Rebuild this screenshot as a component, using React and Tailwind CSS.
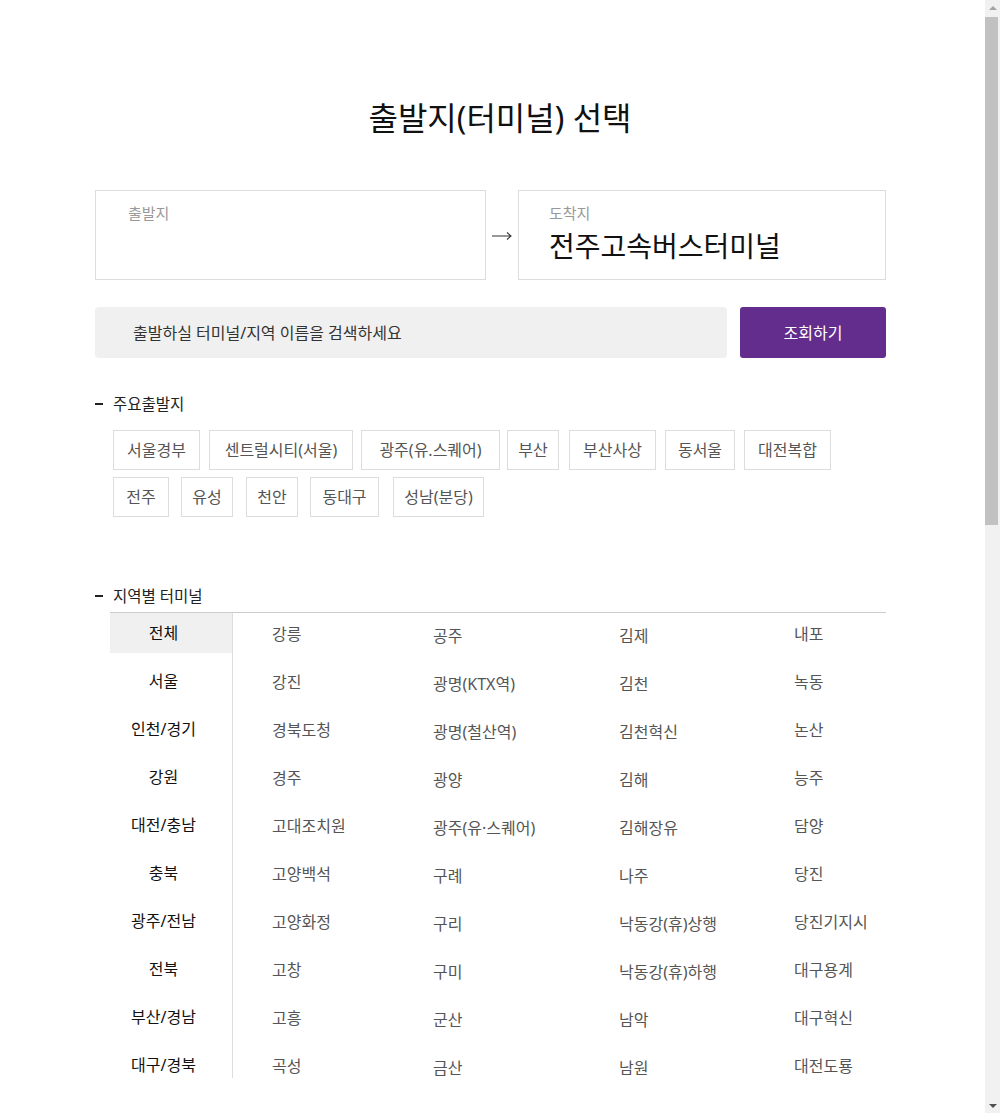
const majorTerminals = [
  [
    ["서울경부", "w-[87px] mr-[9px]"],
    ["센트럴시티(서울)", "w-[144px] mr-[8px]"],
    ["광주(유.스퀘어)", "w-[139px] mr-[7px]"],
    ["부산", "w-[52px] mr-[10px]"],
    ["부산사상", "w-[87px] mr-[9px]"],
    ["동서울", "w-[70px] mr-[9px]"],
    ["대전복합", "w-[87px]"],
  ],
  [
    ["전주", "w-[56px] mr-[12px]"],
    ["유성", "w-[52px] mr-[13px]"],
    ["천안", "w-[52px] mr-[12px]"],
    ["동대구", "w-[69px] mr-[14px]"],
    ["성남(분당)", "w-[91px]"],
  ],
];

const regions = ["전체", "서울", "인천/경기", "강원", "대전/충남", "충북", "광주/전남", "전북", "부산/경남", "대구/경북"];

const terminalColumns = [
  ["강릉", "강진", "경북도청", "경주", "고대조치원", "고양백석", "고양화정", "고창", "고흥", "곡성"],
  ["공주", "광명(KTX역)", "광명(철산역)", "광양", "광주(유·스퀘어)", "구례", "구리", "구미", "군산", "금산"],
  ["김제", "김천", "김천혁신", "김해", "김해장유", "나주", "낙동강(휴)상행", "낙동강(휴)하행", "남악", "남원"],
  ["내포", "녹동", "논산", "능주", "담양", "당진", "당진기지시", "대구용계", "대구혁신", "대전도룡"],
];

const SectionTitle = ({ children }) => (
  <div className="flex items-center h-[22px]">
    <span className="w-[8px] h-[2px] bg-[#222]" />
    <span className="ml-[10px] text-[15.5px] leading-[22px] text-[#222]">{children}</span>
  </div>
);

// browser scrollbar as it shows in the capture
const FakeScrollbar = () => (
  <div className="fixed top-0 right-0 w-[15px] h-full bg-[#f1f1f1] flex flex-col items-center">
    <div className="h-[15px] w-full flex items-center justify-center">
      <span className="w-0 h-0 border-l-[4px] border-r-[4px] border-b-[4px] border-l-transparent border-r-transparent border-b-[#a3a3a3]" />
    </div>
    <div className="mt-[2px] ml-[-2px] w-[13px] h-[508px] bg-[#c1c1c1]" />
    <div className="flex-1" />
    <div className="h-[15px] w-full flex items-center justify-center">
      <span className="w-0 h-0 border-l-[4px] border-r-[4px] border-t-[4px] border-l-transparent border-r-transparent border-t-[#505050]" />
    </div>
  </div>
);

export default function App() {
  return (
    <div className="min-h-[2364px] bg-white font-['Noto_Sans','Noto_Sans_CJK_KR',sans-serif] text-[#222]">
      <FakeScrollbar />

      {/* Title */}
      <h1 className="pt-[96px] text-center text-[32px] leading-[44px] text-[#111]">출발지(터미널) 선택</h1>

      <div className="w-[791px] ml-[95px]">
        {/* From / To */}
        <div className="mt-[50px] flex items-stretch h-[90px]">
          <div className="w-[391px] border border-[#dcdcdc] px-[32px] pt-[11px]">
            <p className="text-[15px] leading-[22px] text-[#999]">출발지</p>
          </div>
          <div className="w-[32px] pt-[2px] flex items-center justify-center">
            <svg width="20" height="10" viewBox="0 0 20 10" fill="none">
              <path d="M0 5H19M15 1.5L19 5L15 8.5" stroke="#333" strokeWidth="1.1" />
            </svg>
          </div>
          <div className="flex-1 border border-[#dcdcdc] px-[30px] pt-[11px]">
            <p className="text-[15px] leading-[22px] text-[#999]">도착지</p>
            <p className="mt-[3px] text-[28px] leading-[38px] text-[#111]">전주고속버스터미널</p>
          </div>
        </div>

        {/* Search */}
        <div className="mt-[27px] flex gap-[13px]">
          <div className="w-[632px] h-[51px] rounded-[4px] bg-[#f0f0f0] pl-[38px] flex items-center">
            <span className="text-[16px] text-[#333]">출발하실 터미널/지역 이름을 검색하세요</span>
          </div>
          <button className="flex-1 h-[51px] rounded-[3px] bg-[#622d8c] text-white text-[16px]">조회하기</button>
        </div>

        {/* Major departures */}
        <div className="mt-[35px]">
          <SectionTitle>주요출발지</SectionTitle>
          <div className="mt-[15px] pl-[18px] flex flex-col gap-[7px]">
            {majorTerminals.map((row, i) => (
              <div key={i} className="flex">
                {row.map(([name, cls]) => (
                  <span
                    key={name}
                    className={`${cls} h-[40px] flex items-center justify-center border border-[#dcdcdc] text-[16px] text-[#555] whitespace-nowrap`}
                  >
                    {name}
                  </span>
                ))}
              </div>
            ))}
          </div>
        </div>

        {/* Terminals by region */}
        <div className="mt-[68px]">
          <div className="pb-[5px]">
            <SectionTitle>지역별 터미널</SectionTitle>
          </div>
          <div className="ml-[15px] border-t border-[#ccc] h-[466px] overflow-hidden flex">
            <ul className="w-[123px] border-r border-[#ddd]">
              {regions.map((r, i) => (
                <li
                  key={r}
                  className={
                    i === 0
                      ? "h-[40px] mb-[8px] pr-[15px] flex items-center justify-center bg-[#f0f0f0] text-[16px] text-[#111]"
                      : "h-[40px] mb-[8px] pr-[15px] flex items-center justify-center text-[16px] text-[#111]"
                  }
                >
                  {r}
                </li>
              ))}
            </ul>
            <div className="flex-1 pl-[39px] pt-[10px] grid grid-cols-[161px_186px_175px_1fr]">
              {terminalColumns.map((col, ci) => (
                <ul key={ci} className={ci === 1 || ci === 2 ? "pt-[2px]" : ""}>
                  {col.map((t) => (
                    <li key={t} className="h-[48px] text-[16px] leading-[22px] text-[#555]">
                      {t}
                    </li>
                  ))}
                </ul>
              ))}
            </div>
          </div>
        </div>
      </div>
    </div>
  );
}
